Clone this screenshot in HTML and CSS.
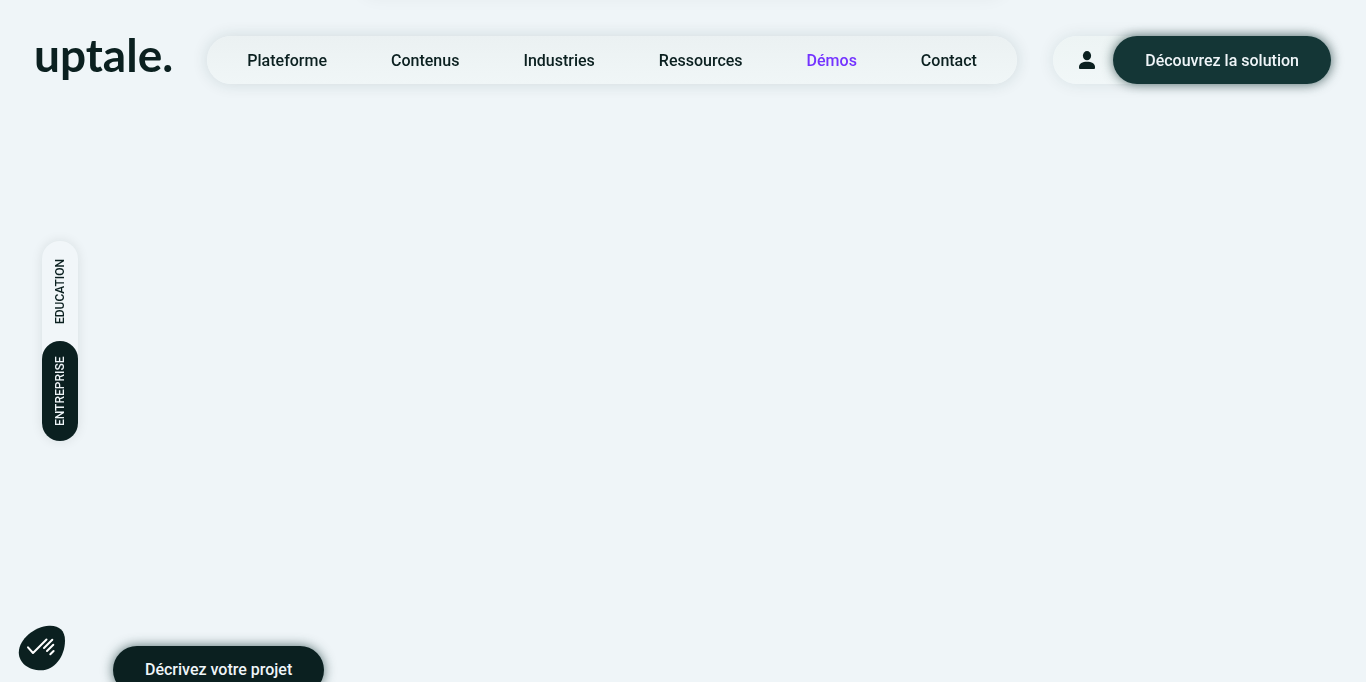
FILE: index.html
```html
<!DOCTYPE html>
<html lang="fr">
<head>
<meta charset="UTF-8">
<meta name="viewport" content="width=device-width, initial-scale=1.0">
<title>Uptale</title>
<link rel="stylesheet" href="styles.css">
</head>
<body>
<div class="drawer"></div>

<header class="header">
  <a class="logo" href="#" aria-label="uptale.">
    <svg width="135" height="48" viewBox="0 0 135 48">
      <text x="-2" y="36">uptale.</text>
    </svg>
  </a>

  <nav class="nav">
    <a href="#">Plateforme</a>
    <a href="#">Contenus</a>
    <a href="#">Industries</a>
    <a href="#">Ressources</a>
    <a class="active" href="#">Démos</a>
    <a href="#">Contact</a>
  </nav>

  <div class="actions">
    <a class="account" href="#" aria-label="Mon compte">
      <svg width="16" height="18" viewBox="0 0 16 18">
        <ellipse cx="8" cy="4.700" rx="4.100" ry="4.600"/>
        <path d="M0 17V16C0 12.500 3.500 10.700 8 10.700S16 12.500 16 16V17Q16 18 15 18H1Q0 18 0 17Z"/>
      </svg>
    </a>
    <a class="btn btn-solution" href="#">Découvrez la solution</a>
  </div>
</header>

<div class="switch">
  <a href="#">EDUCATION</a>
  <a class="current" href="#">ENTREPRISE</a>
</div>

<main class="hero">
  <a class="btn" href="#">Décrivez votre projet</a>
</main>

<button class="cookies" type="button" aria-label="Gérer les cookies">
  <svg width="48" height="46" viewBox="0 0 48 46">
    <path class="blob" d="M31 .8C41 .3 47 5.500 47 15.500C47 32 36 45.300 23 45.300C10 45.300 .8 37.500 .8 27.500C.8 14 17 1.500 31 .8Z"/>
    <path class="tick" d="M10 22.300L15 28L28.500 14.500M26 23L34.300 14.700M29 26L35.300 19.700M32.300 29.300L35.600 26"/>
  </svg>
</button>
</body>
</html>
```
FILE: styles.css
```css
* { box-sizing: border-box; }
body { margin: 0; background: #eff5f8; color: #0b2020; font-family: Roboto, sans-serif; font-size: 16px; font-weight: 500; }
a { color: inherit; text-decoration: none; }

.drawer { position: fixed; bottom: 100%; left: 26%; right: 26%; height: 48px; border-radius: 24px; box-shadow: 0 0 16px rgba(11, 32, 32, 0.04); }

.header { position: fixed; top: 0; left: 0; right: 0; display: flex; align-items: center; justify-content: space-between; padding: 36px; padding-right: 35px; }
.logo svg { display: block; overflow: visible; fill: #0b2020; font-family: Lato, sans-serif; font-size: 46px; font-weight: 700; }

.nav { display: flex; align-items: center; gap: 64px; height: 48px; padding: 0 40px; border-radius: 24px; background: linear-gradient(#ebf1f2, #f0f6f7); box-shadow: 0 0 16px rgba(20, 54, 54, 0.14); }
.nav .active { color: #7433ff; }

.actions { display: flex; align-items: center; height: 48px; border-radius: 24px; background: linear-gradient(#edf4f4, #f1f7f8); box-shadow: 0 0 16px rgba(20, 54, 54, 0.1); }
.account { display: flex; justify-content: center; width: 60px; padding-left: 8px; }
.account svg { fill: #0b2020; }

.btn { height: 48px; padding: 0 32px; border-radius: 24px; background: #0b2020; color: #eff5f8; line-height: 48px; box-shadow: 0 0 12px rgba(20, 54, 54, 0.7); }
.btn-solution { background: #143636; line-height: 50px; }

.switch { position: fixed; left: 42px; top: 50%; transform: translateY(-50%); display: flex; flex-direction: column; width: 36px; border-radius: 18px; background: #f1f6f9; box-shadow: 0 0 12px rgba(11, 32, 32, 0.1); font-size: 12px; }
.switch a { display: flex; align-items: center; justify-content: center; height: 100px; border-radius: 18px; writing-mode: vertical-rl; transform: rotate(180deg); }
.switch .current { background: #0b2020; color: #eff5f8; }

.hero { display: flex; align-items: flex-end; height: 100vh; padding: 0 113px; overflow: hidden; }
.hero .btn { margin-bottom: -12px; }

.cookies { position: fixed; left: 18px; bottom: 11px; padding: 0; border: 0; background: none; cursor: pointer; }
.cookies svg { display: block; }
.blob { fill: #0b2020; }
.tick { fill: none; stroke: #fff; stroke-width: 2; stroke-linecap: round; stroke-linejoin: round; }
```
